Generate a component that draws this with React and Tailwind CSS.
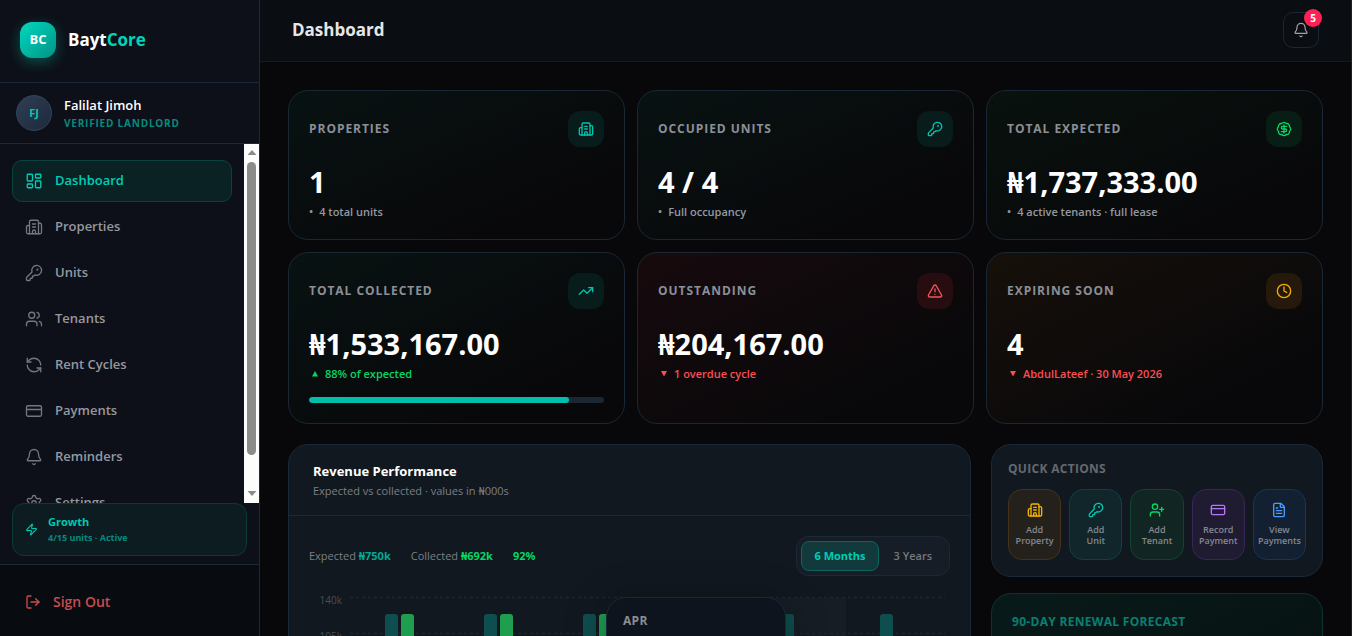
import React, { useState } from "react";
import {
  BadgeDollarSign,
  Bell,
  Building2,
  Clock,
  CreditCard,
  FileText,
  KeyRound,
  LayoutDashboard,
  LogOut,
  RefreshCcw,
  Settings,
  TrendingUp,
  TriangleAlert,
  UserPlus,
  Users,
  Zap,
} from "lucide-react";

const navItems = [
  { label: "Dashboard", icon: LayoutDashboard },
  { label: "Properties", icon: Building2 },
  { label: "Units", icon: KeyRound },
  { label: "Tenants", icon: Users },
  { label: "Rent Cycles", icon: RefreshCcw },
  { label: "Payments", icon: CreditCard },
  { label: "Reminders", icon: Bell },
  { label: "Settings", icon: Settings },
];

const stats = [
  {
    label: "Properties",
    value: "1",
    note: "4 total units",
    icon: Building2,
    card: "from-[#081212]",
    badge: "bg-[#081c1b] text-[#00c4ae]",
  },
  {
    label: "Occupied Units",
    value: "4 / 4",
    note: "Full occupancy",
    icon: KeyRound,
    card: "from-[#081212]",
    badge: "bg-[#081c1b] text-[#00c4ae]",
  },
  {
    label: "Total Expected",
    value: "₦1,737,333.00",
    note: "4 active tenants · full lease",
    icon: BadgeDollarSign,
    card: "from-[#08120e]",
    badge: "bg-[#081d14] text-[#05d665]",
  },
  {
    label: "Total Collected",
    value: "₦1,533,167.00",
    note: "88% of expected",
    trend: "up",
    progress: 88,
    icon: TrendingUp,
    card: "from-[#081212]",
    badge: "bg-[#081c1b] text-[#00c4ae]",
  },
  {
    label: "Outstanding",
    value: "₦204,167.00",
    note: "1 overdue cycle",
    trend: "down",
    icon: TriangleAlert,
    card: "from-[#170a0d]",
    badge: "bg-[#270c10] text-[#f0565b]",
  },
  {
    label: "Expiring Soon",
    value: "4",
    note: "AbdulLateef · 30 May 2026",
    trend: "down",
    icon: Clock,
    card: "from-[#17100a]",
    badge: "bg-[#25190b] text-[#f2ae00]",
  },
];

const actions = [
  { lines: ["Add", "Property"], icon: Building2, box: "bg-[#24211d] border-[#453218]", color: "text-[#f5b301]" },
  { lines: ["Add", "Unit"], icon: KeyRound, box: "bg-[#10262a] border-[#0d4244]", color: "text-[#00c9b1]" },
  { lines: ["Add", "Tenant"], icon: UserPlus, box: "bg-[#112622] border-[#11442e]", color: "text-[#05d665]" },
  { lines: ["Record", "Payment"], icon: CreditCard, box: "bg-[#1f1c31] border-[#3a2458]", color: "text-[#b975f8]" },
  { lines: ["View", "Payments"], icon: FileText, box: "bg-[#132031] border-[#18335c]", color: "text-[#4a9bff]" },
];

const months = [
  { x: 76, collected: true },
  { x: 175, collected: true },
  { x: 274, collected: true },
  { x: 373, collected: false },
  { x: 472, collected: false },
  { x: 571, collected: false },
];

const ticks = ["140k", "105k", "70k", "35k", "0"];

function NavScrollbar() {
  return (
    <div aria-hidden="true" className="flex w-[15px] shrink-0 flex-col items-center bg-[#fcfcfc] pt-[6px] pb-[7px]">
      <svg width="10" height="5" viewBox="0 0 10 5" className="shrink-0">
        <path d="M5 0l4.5 5h-9z" fill="#8b8b8b" />
      </svg>
      <div className="my-[7px] w-[9px] grow rounded-full bg-[#8b8b8b]" />
      <div className="h-[29px] shrink-0" />
      <svg width="10" height="5" viewBox="0 0 10 5" className="shrink-0">
        <path d="M5 5L.5 0h9z" fill="#8b8b8b" />
      </svg>
    </div>
  );
}

function Sidebar() {
  const [active, setActive] = useState("Dashboard");

  return (
    <aside className="flex w-[260px] shrink-0 flex-col border-r border-[#1c2938] bg-[#0d1018]">
      <div className="flex items-center gap-3 border-b border-[#1c2938] px-5 pt-[22px] pb-6">
        <div className="flex size-9 items-center justify-center rounded-xl bg-linear-to-br from-[#00d9c0] to-[#009485] text-[13px] font-bold text-white shadow-[0_4px_14px_rgba(0,201,177,0.35)]">
          BC
        </div>
        <span className="text-[17px] font-bold text-white">
          Bayt<span className="text-[#00d4bb]">Core</span>
        </span>
      </div>

      <div className="flex items-center gap-3 border-b border-[#1c2938] px-4 py-3">
        <div className="flex size-9 items-center justify-center rounded-full border border-[#32445a] bg-linear-to-br from-[#2f3f55] to-[#1e293b] text-[11px] font-bold text-[#00c9b1]">
          FJ
        </div>
        <div>
          <p className="text-[13px] leading-5 font-semibold text-white">Falilat Jimoh</p>
          <p className="text-[10px] leading-4 font-bold tracking-[0.08em] text-[#078a7d] uppercase">
            Verified Landlord
          </p>
        </div>
      </div>

      <div className="flex min-h-0 grow">
        <nav className="flex grow flex-col gap-1 overflow-hidden px-3 pt-4">
          {navItems.map(({ label, icon: Icon }) => (
            <a
              key={label}
              href="#"
              onClick={() => setActive(label)}
              className={
                active === label
                  ? "flex h-[42px] shrink-0 items-center gap-3 rounded-[10px] border border-[#0a4240] bg-[#0b2225] px-3 text-[13px] font-semibold text-[#00cdb5]"
                  : "flex h-[42px] shrink-0 items-center gap-3 rounded-[10px] border border-transparent px-3 text-[13px] font-semibold text-[#9698a0]"
              }
            >
              <Icon
                size={18}
                strokeWidth={1.75}
                className={active === label ? "text-[#00cdb5]" : "text-[#74777f]"}
              />
              {label}
            </a>
          ))}
        </nav>
        <NavScrollbar />
      </div>

      <div className="mx-3 mb-2 flex h-[53px] shrink-0 items-center gap-2.5 rounded-xl border border-[#0b3a39] bg-[#0c1c21] px-3 text-[#00c9b1]">
        <Zap size={13} />
        <div>
          <p className="text-[11px] leading-4 font-bold">Growth</p>
          <p className="text-[9px] leading-4 font-bold text-[#078a7d]">4/15 units · Active</p>
        </div>
      </div>

      <div className="border-t border-[#1c2938] bg-[#080b10] px-3 pt-4 pb-[13px]">
        <button type="button" className="flex h-[42px] w-full items-center gap-3 px-[13px] text-sm font-semibold text-[#cb4c50]">
          <LogOut size={16} />
          Sign Out
        </button>
      </div>
    </aside>
  );
}

function StatNote({ trend, children }) {
  if (trend === "up") {
    return (
      <p className="mt-[2px] flex items-center gap-[6px] text-[11px] leading-[17px] font-semibold text-[#05d665]">
        <svg width="10" height="6" viewBox="0 0 10 6">
          <path d="M6 0l3 5.5H3z" fill="currentColor" />
        </svg>
        {children}
      </p>
    );
  }
  if (trend === "down") {
    return (
      <p className="mt-[2px] flex items-center gap-[6px] text-[11px] leading-[17px] font-semibold text-[#fb4f53]">
        <svg width="10" height="6" viewBox="0 0 10 6">
          <path d="M6 5.5L3 0h6z" fill="currentColor" />
        </svg>
        {children}
      </p>
    );
  }
  return (
    <p className="mt-[2px] flex gap-[6px] text-[11px] leading-[17px] font-semibold text-[#9698a0]">
      <span>•</span>
      {children}
    </p>
  );
}

function StatCard({ label, value, note, trend, progress, icon: Icon, card, badge }) {
  return (
    <section className={`rounded-[20px] border border-[#1a2735] bg-linear-to-br to-[#08080a] to-80% px-5 pt-5 pb-[19px] ${card}`}>
      <div className="flex items-center justify-between">
        <h2 className="text-xs font-bold tracking-[0.08em] text-[#8c8f97] uppercase">{label}</h2>
        <div className={`flex size-9 items-center justify-center rounded-xl ${badge}`}>
          <Icon size={16} />
        </div>
      </div>
      <p className="mt-4 text-[29px] leading-[38px] font-bold text-white">{value}</p>
      <StatNote trend={trend}>{note}</StatNote>
      {progress && (
        <div className="mt-[15px] mb-px h-[6px] overflow-hidden rounded-full bg-[#1b2633]">
          <div className="h-full rounded-full bg-[#00bfaa]" style={{ width: `${progress}%` }} />
        </div>
      )}
    </section>
  );
}

function RevenueChart() {
  return (
    <div className="relative mt-4">
      <svg viewBox="0 0 641 180" className="block w-full">
        <rect x="438" y="6" width="99" height="146" fill="#161d24" />
        {ticks.map((tick, i) => (
          <g key={tick}>
            <line
              x1="41"
              x2="636"
              y1={5.5 + i * 36}
              y2={5.5 + i * 36}
              stroke="#1c2632"
              strokeWidth="1.5"
              strokeDasharray="3 3"
            />
            <text x="33" y={12 + i * 36} textAnchor="end" fontSize="10" fill="#494e55">
              {tick}
            </text>
          </g>
        ))}
        {months.map(({ x, collected }) => (
          <g key={x}>
            <rect x={x} y="22" width="13" height="140" rx="3" fill="#0f4e4f" />
            {collected && <rect x={x + 16} y="22" width="13" height="140" rx="3" fill="#1f9e50" />}
          </g>
        ))}
      </svg>
      {/* Hovered month */}
      <div className="absolute top-[5px] left-[297px] h-28 w-[180px] rounded-[20px] border border-[#1a2938] bg-[#0d141d] p-4 shadow-[0_8px_40px_rgba(0,0,0,0.35)]">
        <p className="text-xs leading-[14px] font-bold tracking-wide text-[#8b8e93]">APR</p>
      </div>
    </div>
  );
}

function RevenueCard() {
  const [range, setRange] = useState("6 Months");

  return (
    <section className="rounded-[20px] border border-[#1a2938] bg-[#11181f]">
      <div className="border-b border-[#1a2938] px-6 pt-4 pb-[14px]">
        <h2 className="text-[13px] leading-5 font-bold text-white">Revenue Performance</h2>
        <p className="text-[11px] leading-5 text-[#7c7f85]">Expected vs collected · values in ₦000s</p>
      </div>
      <div className="p-5">
        <div className="flex items-center justify-between">
          <div className="flex gap-5 text-[11px] text-[#7c7f85]">
            <span>
              Expected <b className="text-[#00a896]">₦750k</b>
            </span>
            <span>
              Collected <b className="text-[#05d665]">₦692k</b>
            </span>
            <b className="text-[#05d665]">92%</b>
          </div>
          <div className="flex gap-0.5 rounded-xl border border-[#1b2837] bg-[#161d26] p-1">
            {["6 Months", "3 Years"].map((option) => (
              <button
                key={option}
                type="button"
                onClick={() => setRange(option)}
                className={
                  range === option
                    ? "h-[30px] rounded-lg border border-[#0b665f] bg-[#12393b] px-3 text-[11px] font-bold text-[#00cdb5]"
                    : "h-[30px] rounded-lg border border-transparent px-3 text-[11px] font-semibold text-[#75787e]"
                }
              >
                {option}
              </button>
            ))}
          </div>
        </div>
        <RevenueChart />
      </div>
    </section>
  );
}

function QuickActions() {
  return (
    <section className="rounded-[20px] border border-[#1a2938] bg-[#11181f] p-4">
      <h2 className="mb-3 text-xs leading-4 font-bold tracking-wide text-[#65696f] uppercase">Quick Actions</h2>
      <div className="grid grid-cols-5 gap-2">
        {actions.map(({ lines, icon: Icon, box, color }) => (
          <button
            key={lines.join(" ")}
            type="button"
            className={`flex h-[71px] flex-col items-center gap-[6px] rounded-[14px] border pt-3 ${box}`}
          >
            <Icon size={16} className={color} />
            <span className="text-[9px] leading-[11px] font-semibold text-[#85888e]">
              {lines[0]}
              <br />
              {lines[1]}
            </span>
          </button>
        ))}
      </div>
    </section>
  );
}

export default function App() {
  return (
    <div className="flex h-screen overflow-hidden bg-[#08080a] font-['Open_Sans','Noto_Sans',sans-serif]">
      <Sidebar />
      <div className="flex min-w-0 grow flex-col border-r border-[#1f1f20]">
        <header className="flex shrink-0 items-center justify-between border-b border-[#16191d] bg-[#0a0d12] px-8 pt-3 pb-[13px]">
          <h1 className="text-[17px] font-bold text-[#e6e6e7]">Dashboard</h1>
          <button
            type="button"
            aria-label="Notifications"
            className="relative flex size-9 items-center justify-center rounded-[10px] border border-[#1a2735] text-[#a3a5a9]"
          >
            <Bell size={16} strokeWidth={1.75} />
            <span className="absolute -top-1 -right-1 flex size-[18px] items-center justify-center rounded-full bg-[#ff2056] text-[10px] font-bold text-white">
              5
            </span>
          </button>
        </header>

        <main className="min-h-0 grow overflow-hidden p-7">
          <div className="grid grid-cols-3 gap-3">
            {stats.map((stat) => (
              <StatCard key={stat.label} {...stat} />
            ))}
          </div>

          <div className="mt-5 grid grid-cols-[minmax(0,1fr)_332px] gap-5">
            <RevenueCard />
            <div className="flex flex-col gap-4">
              <QuickActions />
              <section className="grow rounded-[20px] border border-[#0a3431] bg-linear-to-br from-[#071a19] to-[#070f10] p-5">
                <h2 className="text-xs leading-4 font-bold tracking-wide text-[#078072] uppercase">
                  90-Day Renewal Forecast
                </h2>
              </section>
            </div>
          </div>
        </main>
      </div>
    </div>
  );
}
